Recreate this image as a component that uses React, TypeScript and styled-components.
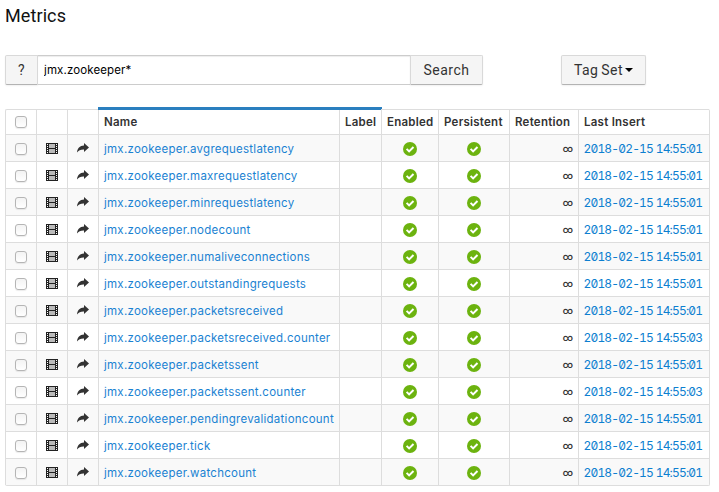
import React from 'react';
import styled, { createGlobalStyle } from 'styled-components';

const Global = createGlobalStyle`
  *, *::before, *::after { box-sizing: border-box; }
  html, body { margin: 0; background: #fff; }
  body { font-family: Inter, "Open Sans", sans-serif; color: #333; overflow: hidden; }
`;

const Page = styled.main`
  padding: 5px;
`;

const Title = styled.h1`
  margin: 0;
  height: 50px;
  font-family: Roboto, sans-serif;
  font-size: 18px;
  line-height: 22px;
  font-weight: 400;
  letter-spacing: 0.1px;
  color: #111;
`;

const Toolbar = styled.div`
  display: flex;
  height: 30px;
  margin-bottom: 24px;
`;

const Button = styled.button<{ $width: number; $side?: 'left' | 'right' }>`
  display: flex;
  align-items: center;
  justify-content: center;
  width: ${p => p.$width}px;
  height: 30px;
  padding: 0;
  border: 1px solid #d9d9d9;
  border-bottom-color: #b3b3b3;
  border-radius: ${p => (p.$side === 'left' ? '2px 0 0 2px' : p.$side === 'right' ? '0 2px 2px 0' : '2px')};
  background: #f5f5f5;
  box-shadow: 0 1px 2px rgba(0, 0, 0, 0.06);
  color: #333;
  font: 14px Roboto, sans-serif;
  letter-spacing: 0.5px;
  word-spacing: -1.2px;
`;

const SearchInput = styled.input`
  width: 372px;
  height: 30px;
  padding: 0 6px;
  border: solid #ccc;
  border-width: 1px 0;
  outline: none;
  box-shadow: inset 0 1px 1px rgba(0, 0, 0, 0.075);
  color: #000;
  font: 11.5px Inter, sans-serif;
  letter-spacing: 0.12px;
`;

const TagSetSlot = styled.div`
  margin-left: 78px;
`;

const Caret = styled.span`
  margin-left: 2px;
  border: 4px solid transparent;
  border-top-color: #000;
  border-bottom: 0;
`;

const Table = styled.table`
  width: 704px;
  table-layout: fixed;
  border-spacing: 0;
  border: solid #ddd;
  border-width: 0 1px 1px 0;
  border-radius: 2px;
  font-size: 11.5px;
`;

const Col = styled.col<{ $width: number }>`
  width: ${p => p.$width}px;
`;

const Th = styled.th<{ $sorted?: boolean }>`
  position: relative;
  height: 25px;
  padding: 1px 0 0 5px;
  border: solid #ddd;
  border-width: 1px 0 0 1px;
  text-align: left;
  font-weight: 600;
  line-height: 23px;
  white-space: nowrap;
  letter-spacing: 0.25px;
  &:first-child { padding: 0 0 1px; border-top-left-radius: 2px; }
  ${p => p.$sorted && `
    &::before {
      content: '';
      position: absolute;
      inset: -3px -1px auto -1px;
      height: 3px;
      background: #2a7fbf;
    }
  `}
`;

const Row = styled.tr`
  &:nth-child(odd) { background: #f9f9f9; }
`;

const Td = styled.td<{ $align?: 'center' | 'right' }>`
  height: 27px;
  padding: 1px ${p => (p.$align === 'center' ? 0 : 5)}px 0;
  border: solid #ddd;
  border-width: 1px 0 0 1px;
  text-align: ${p => p.$align ?? 'left'};
  line-height: 20px;
  white-space: nowrap;
`;

const Link = styled.a`
  color: #1a82d2;
  letter-spacing: 0.25px;
`;

const Infinity = styled.span`
  font: 500 10px/20px Roboto, sans-serif;
`;

const Stamp = styled.a`
  display: block;
  color: #0d7fd0;
  font-size: 12px;
  font-feature-settings: "zero", "tnum";
  letter-spacing: -0.83px;
  word-spacing: 0.3px;
  text-indent: -0.5px;
`;

const Checkbox = styled.input`
  appearance: none;
  display: block;
  width: 12px;
  height: 12px;
  margin: 0 auto;
  border: 1px solid #b5b5b5;
  border-radius: 3px;
  background: linear-gradient(#f3f3f3, #fff);
  box-shadow: 0 1px 1px rgba(0, 0, 0, 0.08);
`;

const Icon = styled.svg`
  display: block;
  margin: 0 auto;
`;

const FilmIcon = () => (
  <Icon width="12" height="12" viewBox="0 0 12 12" shapeRendering="crispEdges">
    <path fill="#222" d="M0 0h12v11H0z" />
    <path fill="#bbb" d="M3 1h6v4H3zM3 6h6v4H3z" />
    <path fill="#fff" d="M1 1h1v1H1zM1 3h1v1H1zM1 5h1v1H1zM1 7h1v1H1zM1 9h1v1H1zM10 1h1v1h-1zM10 3h1v1h-1zM10 5h1v1h-1zM10 7h1v1h-1zM10 9h1v1h-1z" />
  </Icon>
);

const ShareIcon = () => (
  <Icon width="12" height="12" viewBox="0 0 12 12">
    <path fill="#333" d="M7 0 12 4.500 7 9V6.400C3.800 6.300 1.600 7.100 0 9.500 0.300 5.300 2.800 2.700 7 2.500z" />
  </Icon>
);

const CheckIcon = () => (
  <Icon width="14" height="14" viewBox="0 0 14 14">
    <circle cx="7" cy="7" r="7" fill="#6cb30f" />
    <path d="m3.600 6.900 2.500 2.500 4.400-4.400" fill="none" stroke="#fff" strokeWidth="2" />
  </Icon>
);

const WIDTHS = [31, 31, 31, 241, 42, 57, 71, 69, 131];

const METRICS: [string, string][] = [
  ['avgrequestlatency', '01'],
  ['maxrequestlatency', '01'],
  ['minrequestlatency', '01'],
  ['nodecount', '01'],
  ['numaliveconnections', '01'],
  ['outstandingrequests', '01'],
  ['packetsreceived', '01'],
  ['packetsreceived.counter', '03'],
  ['packetssent', '01'],
  ['packetssent.counter', '03'],
  ['pendingrevalidationcount', '01'],
  ['tick', '01'],
  ['watchcount', '01'],
];

export default function App() {
  return (
    <Page>
      <Global />
      <Title>Metrics</Title>
      <Toolbar>
        <Button $width={33} $side="left">?</Button>
        <SearchInput defaultValue="jmx.zookeeper*" />
        <Button $width={73} $side="right">Search</Button>
        <TagSetSlot>
          <Button $width={85}>Tag Set<Caret /></Button>
        </TagSetSlot>
      </Toolbar>
      <Table>
        <colgroup>{WIDTHS.map((w, i) => <Col key={i} $width={w} />)}</colgroup>
        <thead>
          <tr>
            <Th><Checkbox type="checkbox" /></Th>
            <Th /><Th />
            <Th $sorted>Name</Th>
            <Th $sorted>Label</Th>
            <Th>Enabled</Th>
            <Th>Persistent</Th>
            <Th>Retention</Th>
            <Th>Last Insert</Th>
          </tr>
        </thead>
        <tbody>
          {METRICS.map(([name, sec]) => (
            <Row key={name}>
              <Td $align="center"><Checkbox type="checkbox" /></Td>
              <Td $align="center"><FilmIcon /></Td>
              <Td $align="center"><ShareIcon /></Td>
              <Td><Link>jmx.zookeeper.{name}</Link></Td>
              <Td />
              <Td $align="center"><CheckIcon /></Td>
              <Td $align="center"><CheckIcon /></Td>
              <Td $align="right"><Infinity>∞</Infinity></Td>
              <Td><Stamp>2018-02-15 14:55:{sec}</Stamp></Td>
            </Row>
          ))}
        </tbody>
      </Table>
    </Page>
  );
}
